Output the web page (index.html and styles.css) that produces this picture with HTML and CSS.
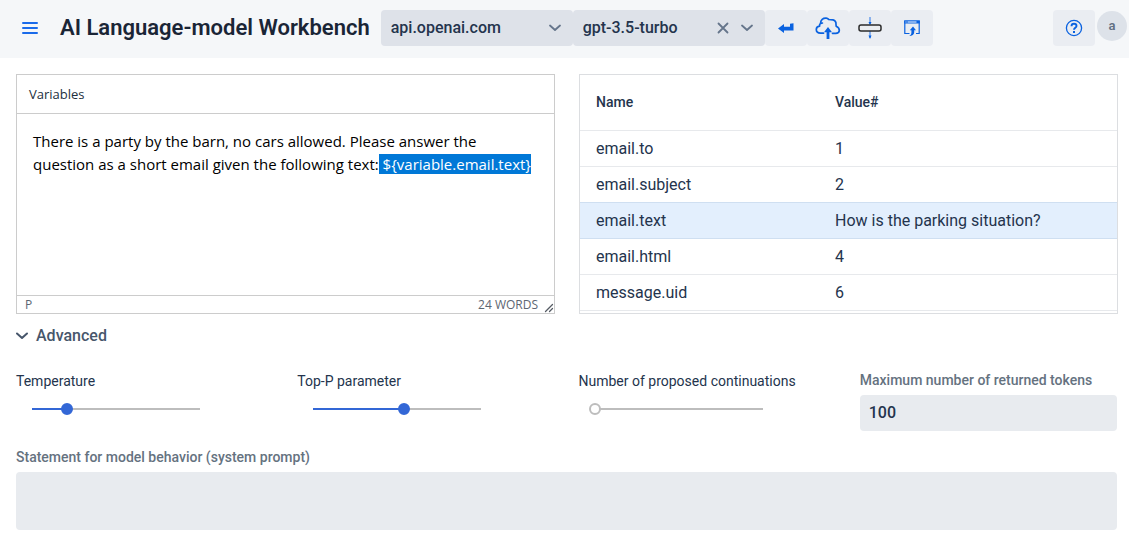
FILE: index.html
```html
<!DOCTYPE html>
<html lang="en">
<head>
<meta charset="utf-8">
<meta name="viewport" content="width=device-width, initial-scale=1">
<title>AI Language-model Workbench</title>
<link rel="stylesheet" href="styles.css">
</head>
<body>
<header class="navbar">
  <button class="menu-toggle" type="button" aria-label="Menu">
    <svg width="16" height="14" viewBox="0 0 16 14" fill="none" stroke="#1a6bea" stroke-width="2" stroke-linecap="round"><path d="M1 2h14M1 7h14M1 12h14"/></svg>
  </button>
  <h1 class="title">AI Language-model Workbench</h1>
  <div class="combo">
    <select class="combo-select" aria-label="Host"><option>api.openai.com</option></select>
    <svg class="combo-chevron" width="12" height="8" viewBox="0 0 12 8" fill="none" stroke="#65758b" stroke-width="1.800" stroke-linecap="round" stroke-linejoin="round"><path d="M1 1.500l5 4.500 5-4.500"/></svg>
  </div>
  <div class="combo">
    <select class="combo-select" aria-label="Model"><option>gpt-3.5-turbo</option></select>
    <button class="combo-clear" type="button" aria-label="Clear model">
      <svg width="12" height="12" viewBox="0 0 12 12" fill="none" stroke="#65758b" stroke-width="1.800" stroke-linecap="round"><path d="M1.500 1.500l9 9M10.500 1.500l-9 9"/></svg>
    </button>
    <svg class="combo-chevron" width="12" height="8" viewBox="0 0 12 8" fill="none" stroke="#65758b" stroke-width="1.800" stroke-linecap="round" stroke-linejoin="round"><path d="M1 1.500l5 4.500 5-4.500"/></svg>
  </div>
  <button class="tool" type="button" aria-label="Submit">
    <svg width="18" height="12" viewBox="0 0 18 12" fill="#0a62e0"><path d="M1 6.500L7 2v2.700h6V1.800l3.500-.6V8.400H7V11z"/></svg>
  </button>
  <button class="tool" type="button" aria-label="Upload">
    <svg width="26" height="24" viewBox="0 0 26 24"><path d="M8.500 17.200H5.500C2.800 17.200 1.300 15.500 1.300 13.600c0-2 1.400-3.300 3.300-3.500-.2-1.100.1-2 .9-2.700C5.600 4 8 2 11.200 2.200c1 .1 1.600.4 2.600 1.300l4.200.4c2 .6 3.200 2.300 3 4.600l.2 1.700c2 1 3.300 2.500 3.100 4.400-.2 1.800-1.800 2.700-3.600 2.700h-3.200M5.500 7.600c.6-.5 1.200-.6 1.900-.6" fill="none" stroke="#0a62e0" stroke-width="1.700" stroke-linecap="round" stroke-linejoin="round"/><path d="M13 11l4 5.200h-2.600V23h-2.800v-6.800H9z" fill="#0a62e0"/></svg>
  </button>
  <button class="tool" type="button" aria-label="Insert between">
    <svg width="26" height="24" viewBox="0 0 26 24"><path d="M13 1v7M13 15v7" stroke="#2a76e6"/><path d="M11.500 6h3L13 9zM11.500 19.500h3L13 23z" fill="#0a62e0"/><rect x="2" y="9" width="22" height="6" rx="2" fill="#eceef1" stroke="#2b2b2b" stroke-width="1.500"/></svg>
  </button>
  <button class="tool" type="button" aria-label="Open in window">
    <svg width="18" height="18" viewBox="0 0 18 18"><path d="M6.500 14.500H1.800V2h14.400v12.500H13" fill="none" stroke="#0a62e0" stroke-width="1.200"/><path d="M1.200 1.500h15.600V4.500H1.200z" fill="#0a62e0"/><path d="M2.500 3h1M4.500 3h9" stroke="#fff"/><path d="M10 7.500l3 3.800h-1.800v1.900c0 2.300-1.900 3.800-5.200 3.800 1.500-.8 2.400-1.700 2.400-3.300v-2.400H6.800z" fill="#0a62e0"/></svg>
  </button>
  <span class="spacer"></span>
  <button class="tool" type="button" aria-label="Help">
    <svg width="18" height="18" viewBox="0 0 18 18" fill="none" stroke="#0a62e0"><circle cx="9" cy="9" r="7.600" stroke-width="1.300"/><path d="M6.500 7.200C6.500 5.600 7.500 4.800 9 4.800s2.500.9 2.500 2.100c0 1.800-2.500 1.800-2.500 3.800" stroke-width="1.900"/><path d="M9 12v2" stroke-width="2"/></svg>
  </button>
  <button class="avatar" type="button" aria-label="Account">a</button>
</header>

<main class="content">
  <div class="panes">
    <section class="editor" aria-label="Prompt editor">
      <div class="editor-toolbar"><button class="editor-button" type="button">Variables</button></div>
      <div class="editor-body" contenteditable="true" role="textbox" aria-multiline="true" aria-label="Prompt">
        <p class="paragraph">There is a party by the barn, no cars allowed. Please answer the question as a short email given the following text:<mark class="selection"> ${variable.email.text}</mark></p>
      </div>
      <div class="editor-status">
        <span>P</span>
        <span class="word-count">24 WORDS</span>
        <svg class="resize" width="10" height="10" viewBox="0 0 10 10" stroke="#555b63" stroke-width="1.300" stroke-linecap="round"><path d="M1.500 8.500l7-7M5.500 8.500l3-3"/></svg>
      </div>
    </section>
    <section class="grid">
      <table class="table">
        <thead><tr><th class="name-column">Name</th><th>Value#</th></tr></thead>
        <tbody>
          <tr><td>email.to</td><td>1</td></tr>
          <tr class="before-selected"><td>email.subject</td><td>2</td></tr>
          <tr class="selected"><td>email.text</td><td>How is the parking situation?</td></tr>
          <tr><td>email.html</td><td>4</td></tr>
          <tr><td>message.uid</td><td>6</td></tr>
        </tbody>
      </table>
    </section>
  </div>

  <details class="advanced" open>
    <summary class="summary">
      <svg width="12" height="8" viewBox="0 0 12 8" fill="none" stroke="#47566b" stroke-width="2" stroke-linecap="round" stroke-linejoin="round"><path d="M1 1.500l5 4.500 5-4.500"/></svg>
      Advanced
    </summary>
    <div class="parameters">
      <div class="parameter">
        <label class="slider-label" for="temperature">Temperature</label>
        <input class="slider" id="temperature" type="range" min="0" max="100" value="21" style="--fill: 21%">
      </div>
      <div class="parameter">
        <label class="slider-label" for="top-p">Top-P parameter</label>
        <input class="slider" id="top-p" type="range" min="0" max="100" value="54" style="--fill: 54%">
      </div>
      <div class="parameter">
        <label class="slider-label" for="continuations">Number of proposed continuations</label>
        <input class="slider slider-empty" id="continuations" type="range" min="0" max="100" value="0" style="--fill: 0%">
      </div>
      <div class="parameter">
        <label class="field-label" for="tokens">Maximum number of returned tokens</label>
        <input class="field" id="tokens" type="text" inputmode="numeric" value="100">
      </div>
    </div>
    <label class="field-label" for="system-prompt">Statement for model behavior (system prompt)</label>
    <textarea class="field field-area" id="system-prompt"></textarea>
  </details>
</main>
</body>
</html>
```
FILE: styles.css
```css
* { box-sizing: border-box; }

body {
  margin: 0;
  background: #fff;
  color: #24344d;
  font: 16px/20px Roboto, "Liberation Sans", sans-serif;
}

button {
  margin: 0;
  padding: 0;
  border: 0;
  background: none;
  color: inherit;
  font: inherit;
  cursor: pointer;
}

svg { display: block; flex: none; }

.navbar {
  display: flex;
  align-items: center;
  height: 58px;
  padding: 0 2px 2px 22px;
  background: #f5f7f9;
}

.menu-toggle { margin-right: 22px; }

.title {
  margin: 0 11px 0 0;
  color: #1a2536;
  font-size: 22px;
  font-weight: 600;
  line-height: 32px;
  white-space: nowrap;
}

.combo { position: relative; flex: 0 1 192px; }

.combo-select {
  display: block;
  width: 100%;
  height: 36px;
  padding: 0 64px 0 10px;
  border: 0;
  border-radius: 4px;
  appearance: none;
  background: #dee2e9;
  color: #24344d;
  font: 500 16px/20px Roboto, "Liberation Sans", sans-serif;
}

.combo-chevron {
  position: absolute;
  top: 14px;
  right: 12px;
  pointer-events: none;
}

.combo-clear { position: absolute; top: 12px; right: 36px; }

.tool {
  display: flex;
  align-items: center;
  justify-content: center;
  width: 42px;
  height: 36px;
  border-radius: 4px;
  background: #eaedf2;
}

.spacer { flex: 1; }

.avatar {
  width: 30px;
  height: 30px;
  margin: 0 0 4px 2px;
  border-radius: 50%;
  background: #dde2e9;
  color: #627083;
  font-size: 13px;
  font-weight: 600;
}

.content { padding: 16px 11px 16px 16px; }

.panes {
  display: grid;
  grid-template-columns: 1fr 1fr;
  gap: 24px;
  height: 240px;
}

.editor {
  display: flex;
  flex-direction: column;
  border: 1px solid #ccc;
  font-family: "Open Sans", "Noto Sans", sans-serif;
}

.editor-toolbar {
  display: flex;
  height: 39px;
  padding: 0 12px;
  border-bottom: 1px solid #ccc;
}

.editor-button { font-size: 13px; color: #222f3e; }

.editor-body {
  flex: 1;
  padding: 16px;
  outline: none;
  color: #000;
  font-size: 15px;
  line-height: 23px;
}

.paragraph { margin: 0; }

.selection { background: #0078d7; color: #fff; }

.editor-status {
  display: flex;
  align-items: center;
  height: 18px;
  padding: 0 0 0 8px;
  border-top: 1px solid #ccc;
  color: #5d6672;
  font-size: 12px;
}

.word-count { margin-left: auto; }

.resize { align-self: flex-end; margin-left: 6px; }

.grid { overflow: hidden; border: 1px solid #dcdee1; }

.table {
  width: 100%;
  border-collapse: separate;
  border-spacing: 0;
  table-layout: fixed;
}

.table th,
.table td {
  height: 36px;
  padding: 0 16px;
  border-bottom: 1px solid #e7e9ec;
  text-align: left;
}

.table th:last-child,
.table td:last-child { padding-left: 0; }

.table th { height: 56px; padding-bottom: 2px; font-size: 14px; font-weight: 500; }

.name-column { width: 255px; }

.table .before-selected td,
.table .selected td { border-color: #cfdff1; }

.selected { background: #e3effd; }

.advanced { margin-right: 1px; }

.summary {
  display: flex;
  align-items: center;
  gap: 8px;
  padding: 12px 0;
  color: #47566b;
  font-weight: 500;
  list-style: none;
  cursor: pointer;
}

.parameters {
  display: grid;
  grid-template-columns: repeat(4, 1fr);
  gap: 24px;
  margin: 12px 0 16px;
}

.slider-label,
.field-label {
  display: block;
  font-size: 14px;
  line-height: 20px;
}

.slider-label { padding-top: 1px; white-space: nowrap; }

.field-label {
  padding-bottom: 5px;
  color: #65727f;
  font-weight: 500;
}

.slider {
  display: block;
  width: 180px;
  height: 12px;
  margin: 12px 10px;
  appearance: none;
  background: linear-gradient(to right, #3367d6 var(--fill), #bdbdbd var(--fill)) center / calc(100% - 12px) 2px no-repeat;
}

.slider::-webkit-slider-thumb {
  width: 12px;
  height: 12px;
  border: 2px solid #3367d6;
  border-radius: 50%;
  appearance: none;
  background: #3367d6;
}

.slider-empty::-webkit-slider-thumb { border-color: #bdbdbd; background: #fff; }

.field {
  display: block;
  width: 100%;
  height: 36px;
  padding: 0 9px 2px;
  border: 0;
  border-radius: 4px;
  background: #e8ebef;
  color: #24344d;
  font: 500 16px/20px Roboto, "Liberation Sans", sans-serif;
}

.field-area { height: 58px; padding: 8px 9px; resize: none; }
```
